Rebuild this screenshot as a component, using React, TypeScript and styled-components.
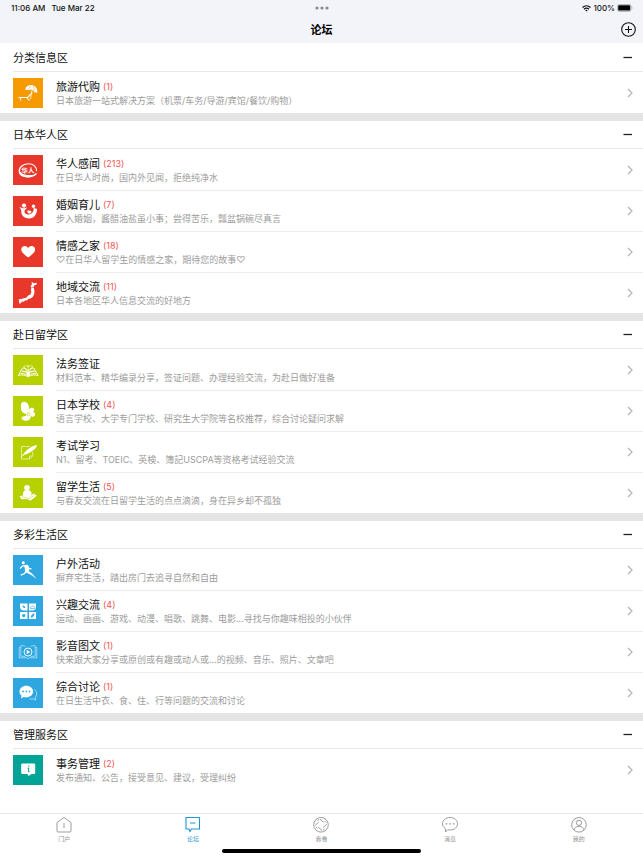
import React, { ReactNode, useState } from "react";
import styled, { createGlobalStyle } from "styled-components";

const GlobalStyle = createGlobalStyle`
  *, *::before, *::after { box-sizing: border-box; }
  body {
    margin: 0;
    background: #fff;
    color: #111;
    font-family: Inter, "Noto Sans CJK SC", sans-serif;
    font-size: 11px;
  }
  h1, h2, ul, p { margin: 0; padding: 0; }
  ul { list-style: none; }
  button { border: 0; padding: 0; background: none; color: inherit; font: inherit; cursor: pointer; }
  a { color: inherit; text-decoration: none; }
  svg { display: block; }
`;

const Page = styled.div`
  display: flex;
  flex-direction: column;
  min-height: 100vh;
`;

const TopArea = styled.header`
  background: #f3f4f9;
`;

const StatusBar = styled.div`
  display: grid;
  grid-template-columns: 1fr auto 1fr;
  align-items: center;
  height: 16px;
  padding: 0 10px 0 11px;
  font-size: 8px;
  line-height: 10px;
  font-weight: 500;
`;

const StatusGroup = styled.div<{ $end?: boolean }>`
  display: flex;
  align-items: center;
  justify-content: ${(p) => (p.$end ? "flex-end" : "flex-start")};
  gap: ${(p) => (p.$end ? "2px" : "6px")};
`;

const NavBar = styled.div`
  display: grid;
  grid-template-columns: 1fr auto 1fr;
  align-items: center;
  height: 27px;
  padding: 0 7px;
`;

const NavTitle = styled.h1`
  grid-column: 2;
  font-size: 11px;
  line-height: 16px;
  font-weight: 700;
  color: #000;
`;

const AddButton = styled.button`
  justify-self: end;
`;

const Content = styled.main`
  flex: 1;
  padding-top: 1px;
`;

const Section = styled.section`
  & + & { border-top: 8px solid #e5e5e5; }
`;

const SectionHeader = styled.div`
  display: flex;
  align-items: center;
  justify-content: space-between;
  height: 28px;
  margin-left: 13px;
  padding-right: 11px;
  border-bottom: 1px solid #e9e9e9;
`;

const SectionTitle = styled.h2`
  font-size: 11px;
  line-height: 16px;
  font-weight: 400;
`;

const ToggleButton = styled.button`
  display: flex;
  align-items: center;
  height: 16px;
`;

const BoardLink = styled.a`
  display: flex;
  align-items: flex-start;
  gap: 13px;
  padding-left: 13px;
`;

const BoardIcon = styled.span<{ $color: string }>`
  flex: none;
  width: 30px;
  height: 30px;
  margin-top: 6px;
  background: ${(p) => p.$color};
`;

const BoardItem = styled.li`
  & + & ${BoardLink} > span:last-child { border-top: 1px solid #ececec; }
`;

const BoardBody = styled.span`
  flex: 1;
  min-width: 0;
  display: flex;
  align-items: center;
  justify-content: space-between;
  gap: 12px;
  height: 41px;
  padding-right: 10px;
`;

const BoardText = styled.span`
  display: block;
  min-width: 0;
  padding-top: 2px;
`;

const BoardName = styled.span`
  display: flex;
  align-items: center;
  gap: 3px;
  font-size: 11px;
  line-height: 14px;
`;

const Count = styled.span`
  font-size: 9px;
  color: #f25555;
`;

const Description = styled.span`
  display: block;
  font-size: 9px;
  line-height: 14px;
  color: #9c9c9c;
`;

const TabBar = styled.nav`
  display: grid;
  grid-template-columns: repeat(5, 1fr);
  height: 36px;
  border-top: 1px solid #e6e6e6;
`;

const Tab = styled.a<{ $active?: boolean }>`
  display: flex;
  flex-direction: column;
  align-items: center;
  padding-top: 2px;
  color: ${(p) => (p.$active ? "#1e96d4" : "#929292")};
  font-size: 6px;
  line-height: 10px;
`;

const HomeIndicator = styled.div`
  width: 31%;
  height: 4px;
  margin: 0 auto 5px;
  border-radius: 2px;
  background: #000;
`;

const Drawing = ({ children }: { children: ReactNode }) => (
  <svg width="30" height="30" viewBox="0 0 30 30" fill="none" aria-hidden="true">
    {children}
  </svg>
);

const Beach = () => (
  <Drawing>
    <path d="M12.400 12.200C12 8.800 15.400 6.300 19 7c3.700 .7 5.800 4 5.300 8-1.300-.9-2.300-1-3.200-.6-.3-1.500-1.300-2.600-2.500-2.800-1-.2-1.900 .1-2.400 .7-1-.8-2.400-.8-3.800-.1z" fill="#fff" />
    <path d="M17.500 7.500l-1.800 3.800M20.500 8l.9 5.200" stroke="#f59a00" strokeWidth=".5" />
    <path d="M19.200 11.500l-1 4.500-.6 5" stroke="#fff" strokeWidth=".8" />
    <path d="M5.500 19.500h9l4.800-4.800M7.500 19.500v3M14 19.800l2.500 2.700" stroke="#fff" strokeWidth="1.100" />
  </Drawing>
);

const Chinese = () => (
  <Drawing>
    <path d="M23.500 18.500C21 21.500 15 22.800 10.500 21.300 5.500 19.600 5 14.500 8.500 11.300c3.800-3.400 10-3.300 13-.4 1.600 1.600 2.300 3.500 2 5.300" stroke="#fff" strokeWidth="1.200" />
    <path d="M7 16c1.500 3.500 7 5 15.500 3.500-3.500 2.700-9 3.500-12.500 2C7.200 20.400 6.200 18.500 7 16z" fill="#fff" />
    <text x="8.500" y="18" fontSize="6.500" fontWeight="700" fill="#fff" transform="rotate(-3 15 16)">华人</text>
  </Drawing>
);

const Family = () => (
  <Drawing>
    <circle cx="11" cy="9.600" r="2.100" fill="#fff" />
    <circle cx="20.500" cy="10.200" r="1.700" fill="#fff" />
    <path d="M6.300 11.300c1.500-.5 2.300 .6 3.500 .9 1.300 .4 2.900-.1 4.300-.9-.5 1.700-2.500 2.500-2.700 3.900-.3 2 2 3.400 4.500 3.200 2.700-.2 4.200-1.900 4.900-4.900-.7-.5-.7-1.100 .1-1.300 1-.2 2.200 .1 3.200 .7-.2 5.300-3 9.500-8 9.500-4.900 0-7.900-3-7.800-7.200 0-1.400-.5-2.500-2-3.900z" fill="#fff" />
    <path d="M14.300 15.200c.4-1.400 2-1.300 2.400-.2 .8-.8 2-.1 1.700 1-.2 1-1.300 1.400-2.300 1.700-.9-.6-1.900-1.300-1.800-2.500z" fill="#fff" />
  </Drawing>
);

const HeartMark = () => (
  <Drawing>
    <path d="M15.200 20.500C11 17.300 8.300 15.200 8.300 12.500c0-2 1.500-3.400 3.400-3.400 1.500 0 2.800 .8 3.500 2.200 .7-1.400 2-2.200 3.400-2.200 2 0 3.500 1.400 3.500 3.400 0 2.700-2.700 4.800-6.900 8z" fill="#fff" />
  </Drawing>
);

const JapanMap = () => (
  <Drawing>
    <path d="M18.600 3.800l2.200 1.400 3-.4-.4 1.900-2.200 .8-.8 1.700-2.200 .4-.6-1.700 1.300-1.300z" fill="#fff" />
    <path d="M18.300 9.500l2.500 .3 .7 3.400-.4 3-1.300 2.900-2.500 1.500-2.100 .3-1.400 1.500-2.300-.2-1.900 1.100-2-.4 2-2.400 3.700-.8 1.800-2.200 2-.7 1.200-2.300-.3-2.700z" fill="#fff" />
    <path d="M5.700 21.400l2.600-.6 .8 1.100-.6 2.500-1.800 1.500-.7-2.300zM9.500 22l2.500-.3-.5 1.600-2.100 .6z" fill="#fff" />
  </Drawing>
);

const LawBook = () => (
  <Drawing>
    <path d="M5.300 20.500l4.200-7.500c2.300 0 4.500 1 5.700 3 1.200-2 3.400-3 5.700-3l4.200 7.500c-3-.8-6.500-.8-8.900 .8h-2c-2.400-1.600-5.900-1.600-8.900-.8z" stroke="#fff" strokeWidth=".9" />
    <path d="M8.500 16l5 .9M7.500 18.200l5.500 1M22 16l-5 .9M23 18.200l-5.500 1" stroke="#fff" strokeWidth="1.100" />
    <path d="M13.200 16l2 .7 2-.7-.4 4.700-1.600 1.100-1.600-1.100z" fill="#fff" />
    <path d="M15.200 9.500V16M10.500 11.500c1.200-1 3-.9 4.700 0 1.700-.9 3.500-1 4.700 0M10.800 11.500l3 4.500M19.600 11.500l-3 4.500" stroke="#fff" strokeWidth=".6" />
  </Drawing>
);

const School = () => (
  <Drawing>
    <path d="M8 8.500c.3-2 2-3 4-2.600 2.700 .6 4.300 3.500 4 6.700-.2 2.300-1 4-2 5.600-2.900-.5-5.100-2.100-5.800-4.500-.5-1.700-.5-3.500-.2-5.200z" fill="#fff" />
    <path d="M14.500 16.500c.8-3.500 3.500-5.700 5.600-4.500 1.600 .9 1.300 2.900-.1 3.900 1.600 .2 2.400 1.500 2 3-.5 1.800-2.700 2.300-4.100 1.100-.2 2.500-1.600 4.400-4 4.700-3.200 .4-5.500-1.300-5.400-3 .1-1.500 2.500-1.200 4.500-2z" fill="#fff" />
    <circle cx="15.700" cy="18.300" r="1.500" stroke="#b6d000" strokeWidth=".6" />
  </Drawing>
);

const Exam = () => (
  <Drawing>
    <path d="M17 9.500H8.500V22h8l3.200-3.200v-4" stroke="#fff" strokeOpacity=".75" strokeWidth=".8" />
    <path d="M16.500 22v-3h3.200" stroke="#fff" strokeOpacity=".75" strokeWidth=".7" />
    <path d="M7.500 21.500c2.300-4.500 6-8.600 10-10.900 2.300-1.300 4.500-2.200 6.400-2.500-.3 2.300-2 4.300-4.500 5.800-3 2-6 3.300-8.300 3.900-1.300 1-2.500 2.300-3.600 3.700z" fill="#fff" />
  </Drawing>
);

const Reader = () => (
  <Drawing>
    <circle cx="14" cy="9.800" r="2.800" fill="#fff" />
    <path d="M12 12.300h4c2.500 .8 3 3 2.300 5.200L15 19.800l-5-2.700c-.2-2 .3-4 2-4.800z" fill="#fff" />
    <path d="M6.500 18.300l6-1.500 3.500 2.400 4.500-3.700 3.300 2.200-6.500 5-3.200-1.700-5.600 .3z" fill="#fff" />
    <path d="M9 19l4 .5 3 1.400 5.500-3.800" stroke="#b6d000" strokeWidth=".5" />
  </Drawing>
);

const Runner = () => (
  <Drawing>
    <circle cx="10.300" cy="7.700" r="1.500" fill="#fff" />
    <path d="M7 13.500l2.700-2.700 4.500-.4 1.800 3 2.500 .4" stroke="#fff" strokeWidth="1.200" strokeLinejoin="round" />
    <path d="M11 10l4 .5 1.500 3-.8 2.700 3 2 5.200 5.800-6.500-4.500-4.900-2.300z" fill="#fff" />
    <path d="M13 15.500l-1.300 3-3.900 1.700" stroke="#fff" strokeWidth="1.300" strokeLinejoin="round" />
  </Drawing>
);

const Hobby = () => (
  <Drawing>
    <path d="M7 7.500h7.500v7H11A4 4 0 0 1 7 11zM16 7.500h7V11a4 4 0 0 1-3.500 3.500H16zM7 16h7.500v7H7zM16 16h7v7h-7z" fill="#fff" />
    <path d="M9.500 9.500c1.500-.3 2.800 .7 2.800 2.500-1.500 .2-2.800-.7-2.800-2.500z" fill="#2ea7e0" />
    <path d="M17.500 12.500c-.8-1 .2-2 1-1.800 .5-1.300 2.500-1 2.700 .3 .8 .1 .9 1.200 .2 1.500z" stroke="#2ea7e0" strokeWidth=".6" />
    <circle cx="10.700" cy="19.600" r="1.600" fill="#2ea7e0" />
    <path d="M12.500 17.800l-1.500 1.500M18 21.500c0-2 1.300-3.500 3.200-4 .2 2.200-1.200 3.800-3.200 4z" stroke="#2ea7e0" fill="#2ea7e0" strokeWidth=".4" />
  </Drawing>
);

const Media = () => (
  <Drawing>
    <path d="M12.500 9.500c-1.500-.8-3-.8-4.700-.8v10.500c1.700 0 3 .1 4.700 .7M17.500 9.500c1.500-.8 3-.8 4.700-.8v10.500c-1.700 0-3 .1-4.700 .7M7.500 10.500H6.200v10.300h7.500l1.300 .8 1.300-.8h7.500V10.500h-1.300" stroke="#fff" strokeOpacity=".85" strokeWidth=".6" />
    <circle cx="15" cy="15" r="4" fill="#2ea7e0" stroke="#fff" strokeWidth=".9" />
    <path d="M13.700 12.800v4.400l3.500-2.200z" fill="#fff" />
  </Drawing>
);

const Talk = () => (
  <Drawing>
    <path d="M21.500 11.500c3 2.300 2.700 6.300 .5 8.300l.7 2.200-2.500-1.200c-1.500 .5-2.700 .3-3.700 0" stroke="#fff" strokeOpacity=".8" strokeWidth=".7" />
    <path d="M13.300 7.800c3.800 0 6.800 2.500 6.800 5.800s-3 5.800-6.800 5.800c-.9 0-1.700-.1-2.500-.4L8 20.500l.5-2.700c-1.300-1-2-2.500-2-4.200 0-3.300 3-5.800 6.800-5.800z" fill="#fff" />
    <path d="M9.300 13.500h1.600M12.500 13.500h1.600M15.700 13.500h1.600" stroke="#2ea7e0" strokeWidth="1.400" />
  </Drawing>
);

const Notice = () => (
  <Drawing>
    <path d="M9.200 8.500h12a1 1 0 0 1 1 1v8.500a1 1 0 0 1-1 1h-2.700L15.700 21l-1.500-2h-5a1 1 0 0 1-1-1V9.500a1 1 0 0 1 1-1z" fill="#fff" />
    <path d="M15.800 10.500v1.300M14.500 13.200h1.300l-.4 3.500h1.300" stroke="#00a497" strokeWidth="1" />
  </Drawing>
);

type Board = { name: string; count?: number; text: string; icon: ReactNode };
type Group = { title: string; color: string; boards: Board[] };

const groups: Group[] = [
  {
    title: "分类信息区",
    color: "#f59a00",
    boards: [
      { name: "旅游代购", count: 1, text: "日本旅游一站式解决方案（机票/车务/导游/宾馆/餐饮/购物）", icon: <Beach /> },
    ],
  },
  {
    title: "日本华人区",
    color: "#e8382b",
    boards: [
      { name: "华人感闻", count: 213, text: "在日华人时尚，国内外见闻，拒绝纯净水", icon: <Chinese /> },
      { name: "婚姻育儿", count: 7, text: "步入婚姻，酱醋油盐虽小事；尝得苦乐，瓢盆锅碗尽真言", icon: <Family /> },
      { name: "情感之家", count: 18, text: "♡在日华人留学生的情感之家，期待您的故事♡", icon: <HeartMark /> },
      { name: "地域交流", count: 11, text: "日本各地区华人信息交流的好地方", icon: <JapanMap /> },
    ],
  },
  {
    title: "赴日留学区",
    color: "#b6d000",
    boards: [
      { name: "法务签证", text: "材料范本、精华编录分享，签证问题、办理经验交流，为赴日做好准备", icon: <LawBook /> },
      { name: "日本学校", count: 4, text: "语言学校、大学专门学校、研究生大学院等名校推荐，综合讨论疑问求解", icon: <School /> },
      { name: "考试学习", text: "N1、留考、TOEIC、英検、簿記USCPA等资格考试经验交流", icon: <Exam /> },
      { name: "留学生活", count: 5, text: "与春友交流在日留学生活的点点滴滴，身在异乡却不孤独", icon: <Reader /> },
    ],
  },
  {
    title: "多彩生活区",
    color: "#2ea7e0",
    boards: [
      { name: "户外活动", text: "摒弃宅生活，踏出房门去追寻自然和自由", icon: <Runner /> },
      { name: "兴趣交流", count: 4, text: "运动、画画、游戏、动漫、唱歌、跳舞、电影...寻找与你趣味相投的小伙伴", icon: <Hobby /> },
      { name: "影音图文", count: 1, text: "快来跟大家分享或原创或有趣或动人或...的视频、音乐、照片、文章吧", icon: <Media /> },
      { name: "综合讨论", count: 1, text: "在日生活中衣、食、住、行等问题的交流和讨论", icon: <Talk /> },
    ],
  },
  {
    title: "管理服务区",
    color: "#00a497",
    boards: [
      { name: "事务管理", count: 2, text: "发布通知、公告，接受意见、建议，受理纠纷", icon: <Notice /> },
    ],
  },
];

const TabDrawing = ({ children }: { children: ReactNode }) => (
  <svg width="18" height="18" viewBox="0 0 18 18" fill="none" stroke="currentColor" strokeWidth=".9" aria-hidden="true">
    {children}
  </svg>
);

const tabs = [
  { label: "门户", icon: <path d="M2 6.500 9 1.500l7 5V15a1 1 0 0 1-1 1H3a1 1 0 0 1-1-1zM9 7v5" /> },
  { label: "论坛", icon: <path d="M2 1.500h13.500V13H7.500L6 15.500 5 13H2zM6 7h5.500" strokeWidth="1.100" /> },
  {
    label: "春卷",
    icon: (
      <>
        <circle cx="9" cy="8.800" r="7.300" />
        <path d="M3.200 9.300l3.600-3.200M8 3.200l3.700 3.200M11.200 11.500l3.600-3.200M6.300 11.200l3.700 3.200M5.500 12.500 4 11M12.500 5l1.500 1.500M5.500 4.500 7 3.500M12.500 13l-1.500 1.200" />
      </>
    ),
  },
  {
    label: "消息",
    icon: (
      <>
        <path d="M9 1.500c4.300 0 7.500 2.700 7.500 6.300S13.300 14 9 14c-.8 0-1.600-.1-2.300-.3L4.500 16l-.2-3.500C2.500 11.300 1.500 9.700 1.500 7.800c0-3.600 3.200-6.300 7.500-6.300z" />
        <path d="M4.800 7.800h1.500M8.300 7.800h1.500M11.800 7.800h1.500" strokeWidth="1.300" />
      </>
    ),
  },
  {
    label: "我的",
    icon: (
      <>
        <circle cx="9" cy="8.800" r="7.300" />
        <circle cx="9" cy="6.800" r="2.600" />
        <path d="M4 14c.5-2.500 2.500-3.700 5-3.700s4.500 1.200 5 3.700" />
      </>
    ),
  },
];

const ForumSection = ({ group }: { group: Group }) => {
  const [open, setOpen] = useState(true);
  return (
    <Section>
      <SectionHeader>
        <SectionTitle>{group.title}</SectionTitle>
        <ToggleButton type="button" aria-label={group.title} aria-expanded={open} onClick={() => setOpen(!open)}>
          <svg width="9" height="9" viewBox="0 0 9 9" stroke="#222" strokeWidth="1.300" aria-hidden="true">
            <path d={open ? "M.5 4.500h8.500" : "M.5 4.500h8.500M4.700 .2v8.600"} />
          </svg>
        </ToggleButton>
      </SectionHeader>
      {open && (
        <ul>
          {group.boards.map((board) => (
            <BoardItem key={board.name}>
              <BoardLink href="#board">
                <BoardIcon $color={group.color}>{board.icon}</BoardIcon>
                <BoardBody>
                  <BoardText>
                    <BoardName>
                      {board.name}
                      {board.count !== undefined && <Count>({board.count})</Count>}
                    </BoardName>
                    <Description>{board.text}</Description>
                  </BoardText>
                  <svg width="6" height="10" viewBox="0 0 6 10" fill="none" stroke="#b4b4b4" strokeWidth="1.200" aria-hidden="true">
                    <path d="M1 1l4 4-4 4" />
                  </svg>
                </BoardBody>
              </BoardLink>
            </BoardItem>
          ))}
        </ul>
      )}
    </Section>
  );
};

export default function App() {
  return (
    <>
      <GlobalStyle />
      <Page lang="zh-CN">
        <TopArea>
          <StatusBar>
            <StatusGroup>
              <span>11:06 AM</span>
              <span>Tue Mar 22</span>
            </StatusGroup>
            <svg width="14" height="4" viewBox="0 0 14 4" fill="#8a8b8f" aria-hidden="true">
              <circle cx="2" cy="2" r="1.600" />
              <circle cx="7" cy="2" r="1.600" />
              <circle cx="12" cy="2" r="1.600" />
            </svg>
            <StatusGroup $end>
              <svg width="9" height="7" viewBox="0 0 9 7" fill="none" stroke="#111" strokeWidth="1.200" aria-hidden="true">
                <path d="M.5 2.500c2.300-2.200 5.700-2.200 8 0M2 4.200c1.500-1.400 3.500-1.400 5 0" />
                <path d="M3.200 5.200c.8-.7 1.800-.7 2.600 0L4.500 6.600z" fill="#111" stroke="none" />
              </svg>
              <span>100%</span>
              <svg width="16" height="8" viewBox="0 0 16 8" aria-hidden="true">
                <rect x=".4" y=".4" width="13.600" height="7" rx="2" fill="none" stroke="#999" strokeWidth=".7" />
                <rect x="1.200" y="1.200" width="12" height="5.400" rx="1.200" fill="#000" />
                <path d="M14.800 2.700c.8 .3 .8 2.100 0 2.400z" fill="#999" />
              </svg>
            </StatusGroup>
          </StatusBar>
          <NavBar>
            <NavTitle>论坛</NavTitle>
            <AddButton type="button" aria-label="发帖">
              <svg width="15" height="15" viewBox="0 0 15 15" fill="none" stroke="#111" strokeWidth="1.100" aria-hidden="true">
                <circle cx="7.500" cy="7.500" r="6.800" />
                <path d="M4 7.500h7M7.500 4v7" />
              </svg>
            </AddButton>
          </NavBar>
        </TopArea>
        <Content>
          {groups.map((group) => (
            <ForumSection key={group.title} group={group} />
          ))}
        </Content>
        <TabBar>
          {tabs.map((tab) => (
            <Tab key={tab.label} href="#tab" $active={tab.label === "论坛"} aria-current={tab.label === "论坛" ? "page" : undefined}>
              <TabDrawing>{tab.icon}</TabDrawing>
              {tab.label}
            </Tab>
          ))}
        </TabBar>
        <HomeIndicator />
      </Page>
    </>
  );
}
